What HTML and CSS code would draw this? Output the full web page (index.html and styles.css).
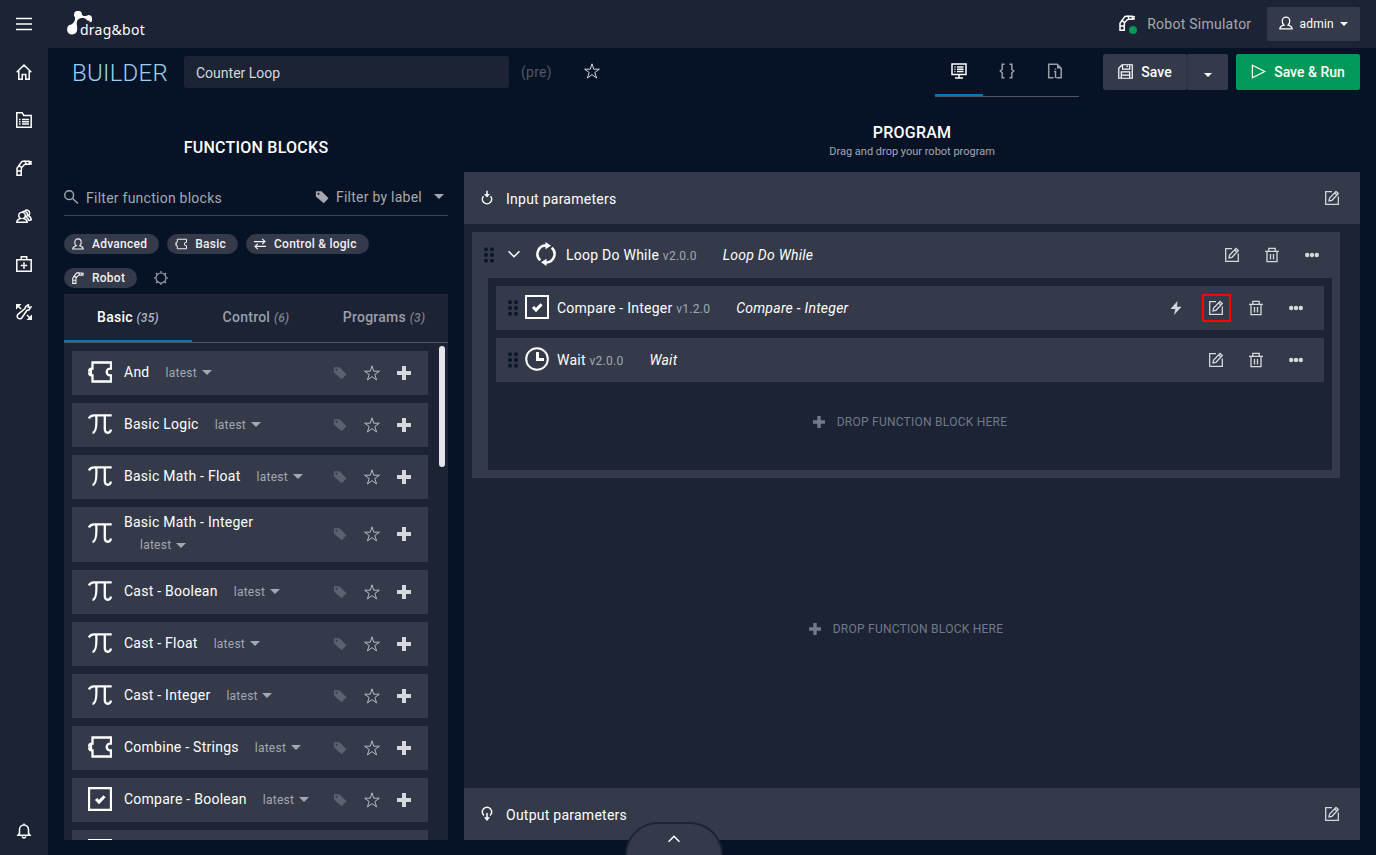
FILE: index.html
```html
<!DOCTYPE html>
<html lang="en">
<head>
    <meta charset="UTF-8">
    <meta name="viewport" content="width=device-width, initial-scale=1">
    <title>Counter Loop - Builder</title>
    <link rel="stylesheet" href="styles.css">
</head>
<body>
    <!-- icon set -->
    <svg class="sprite" aria-hidden="true">
        <symbol id="i-menu" viewBox="0 0 16 16"><path d="M0 2.500h16M0 8h16M0 13.500h16"/></symbol>
        <symbol id="i-home" viewBox="0 0 16 16"><path d="M.7 8.200L8 1l7.300 7.200M2.800 7v8.200h3.400v-4.700h3.600v4.700h3.400V7"/></symbol>
        <symbol id="i-folder" viewBox="0 0 16 16"><path d="M.8 15.200V.8h5.400l1.600 2.600h7.400v11.800zM3 7.500h1.500M6 7.500h7M3 9.800h1.500M6 9.800h7M3 12h1.500M6 12h7"/></symbol>
        <symbol id="i-robot" viewBox="0 0 16 16"><path d="M1 15.200V11h4.200v4.200zM1 11V8.200l1.500-2h1.700l1.300 1.500-.3 3.300M2.300 6.200L6 1.500l3-.5 1 3-1.800.8-3 3.200M9.500 1.300H13l3 .8M10 4.200h3.500L13 1.500M13.500 3.600l2.500.4"/></symbol>
        <symbol id="i-users" viewBox="0 0 16 16"><path d="M.8 14.200c0-2.200 1.800-3.300 3.700-3.800a3.300 3.300 0 1 1 3 0c1.900.5 3.700 1.600 3.700 3.800zM6.300 4.200a3 3 0 0 1 4.900 3.200c-.3.900-.8 1.400-1.200 1.600 1.500.6 2.600 2 3 4M9 2.600a3 3 0 0 1 4.500 3.300c-.3.900-.7 1.400-1.200 1.600 1.500.7 2.700 2.200 3 4.200l-2 .8"/></symbol>
        <symbol id="i-medkit" viewBox="0 0 16 16"><path d="M.8 3.800h14.400v11.400H.8zM5.300 3.500V.8h5.400v2.700M8 6.300v6.400M4.800 9.500h6.400"/></symbol>
        <symbol id="i-tools" viewBox="0 0 16 16"><path d="M1.700 10.600l7.300-6 .7-2.100L12.500.6l-.3 2.600 2.700-.2-1.800 2.800-2.200.7-5 7.200a2.600 2.600 0 1 1-4.200-3.100zM1 1l4 4M15 15l-4-4"/><path class="solid" d="M0 0h5.500L0 5.500zM16 16h-5.500L16 10.500z"/></symbol>
        <symbol id="i-bell" viewBox="0 0 16 16"><path d="M2 12.300h12l-1.500-2V6.500a4.500 4.500 0 0 0-9 0v3.800zM8 2V.4M6.300 13.300a1.700 1.700 0 0 0 3.400 0"/></symbol>
        <symbol id="i-user" viewBox="0 0 16 16"><path d="M1 14.700c0-2.200 1.500-3.500 4.600-4.400C3.900 9 3.700 7.300 3.700 5.500a4.300 4.300 0 0 1 8.600 0c0 1.800-.2 3.500-1.900 4.800 3.100.9 4.600 2.200 4.600 4.400z"/></symbol>
        <symbol id="i-star" viewBox="0 0 16 16"><path d="M8 .8l1.700 5.400h5.700l-4.600 3.300 1.800 5.500L8 11.600 3.400 15l1.800-5.500L.6 6.200h5.700z"/></symbol>
        <symbol id="i-monitor" viewBox="0 0 16 16"><path d="M1 1h14v10.500H1zM4 15h8M8 12v3M3.500 4h1M6 4h6.500M3.500 6.200h1M6 6.200h6.500M3.500 8.500h1M6 8.500h6.500"/></symbol>
        <symbol id="i-braces" viewBox="0 0 16 16"><path d="M5.500 1.200H3.200v5L1.300 8l1.900 1.800v5h2.300M10.500 1.200h2.300v5L14.700 8l-1.900 1.800v5h-2.300"/></symbol>
        <symbol id="i-doc" viewBox="0 0 16 16"><path d="M1.700 1.200h8.500l4 4v9.600H9.500M6.500 14.800H1.700V.5M8.500 8v7M7 8.500h1.500M8.500 5.500v1.200"/><path class="solid" d="M10 1l4.500 4.500H10z"/></symbol>
        <symbol id="i-save" viewBox="0 0 16 16"><path d="M.8 4.500L4.300.8h10.900v14.400H.8zM4.800 1v4.500h7.700V1M9.800 1.500v2M3.500 15V8.500h9V15M3.500 11.800h9"/></symbol>
        <symbol id="i-play" viewBox="0 0 16 16"><path d="M1.500 1.300L14.700 8 1.500 14.700z"/></symbol>
        <symbol id="i-caret" viewBox="0 0 10 5"><path class="solid" d="M0 0h10L5 5z"/></symbol>
        <symbol id="i-search" viewBox="0 0 16 16"><circle cx="5.500" cy="5.500" r="4.700"/><path d="M8.900 8.900l6 5.600"/></symbol>
        <symbol id="i-tag" viewBox="0 0 16 16"><path class="solid" fill-rule="evenodd" d="M1 1.500h6.500l8 8L10 15 1 7.500zM4 3.200a1.200 1.200 0 1 0 0 2.400 1.200 1.200 0 0 0 0-2.400z"/></symbol>
        <symbol id="i-puzzle" viewBox="0 0 24 24"><path d="M4.500 2.500H23v6.200h-1a3.300 3.300 0 0 0 0 6.600h1v6.200H4.500v-6.200H3.200a2 2 0 0 1-2-2H3v-2.600H1.200a2 2 0 0 1 2-2h1.300z"/></symbol>
        <symbol id="i-swap" viewBox="0 0 16 16"><path d="M0 4.800h14.500M11 1.200l3.700 3.600L11 8M16 11.200H1.500M5 7.700l-3.700 3.500L5 14.800"/></symbol>
        <symbol id="i-gear" viewBox="0 0 16 16"><circle cx="8" cy="8" r="5"/><path d="M8 1v2M8 13v2M1 8h2M13 8h2M3 3l1.500 1.500M11.500 11.500L13 13M3 13l1.500-1.500M11.500 4.500L13 3"/></symbol>
        <symbol id="i-pi" viewBox="0 0 24 24"><path d="M.8 6.500C2 4 4 3.300 6 3.300h17.700M8.300 4c.3 6 .3 16.500-3.800 17M16.800 4v13c0 5 5.700 4.800 6 .5"/></symbol>
        <symbol id="i-check" viewBox="0 0 24 24"><path d="M1 1h22v22H1z"/><path class="thick" d="M8 12l3 3 5.500-5.800"/></symbol>
        <symbol id="i-clock" viewBox="0 0 24 24"><circle cx="12" cy="12" r="10.800"/><path class="thick" d="M12.500 5v7.500H19"/></symbol>
        <symbol id="i-loop" viewBox="0 0 20 24"><path d="M4.300 18.300A8.500 8.500 0 0 1 10.500 3.500M15.700 5.700A8.500 8.500 0 0 1 9.500 20.500"/><path class="solid" d="M9.500 0l5.500 3.700-5.500 3.600zM10.500 16.700V24L5 20.300z"/></symbol>
        <symbol id="i-grip" viewBox="0 0 10 16"><path class="solid" d="M0 2.200a2 2 0 1 1 4 0 2 2 0 0 1-4 0M6 2.200a2 2 0 1 1 4 0 2 2 0 0 1-4 0M0 8a2 2 0 1 1 4 0 2 2 0 0 1-4 0M6 8a2 2 0 1 1 4 0 2 2 0 0 1-4 0M0 13.800a2 2 0 1 1 4 0 2 2 0 0 1-4 0M6 13.800a2 2 0 1 1 4 0 2 2 0 0 1-4 0"/></symbol>
        <symbol id="i-down" viewBox="0 0 12 12"><path d="M.5 3.200L6 8.800l5.500-5.600"/></symbol>
        <symbol id="i-up" viewBox="0 0 12 12"><path d="M.5 8.800L6 3.200l5.500 5.600"/></symbol>
        <symbol id="i-edit" viewBox="0 0 16 16"><path d="M8 1.700H1.700v12.600h12.600V6.500M5 11l.6-3L12 1.500l2.300 2L8 10.300zM10.800 3l2 2"/></symbol>
        <symbol id="i-trash" viewBox="0 0 16 16"><path d="M1 4.300h14M4.800 4V1.400h6.400V4M3 4.500v10.200h10V4.500M6.500 7v5.500M9.500 7v5.500"/></symbol>
        <symbol id="i-dots" viewBox="0 0 16 16"><path class="solid" d="M1 8a2.200 2.200 0 1 1 4.400 0A2.200 2.200 0 0 1 1 8M5.800 8a2.200 2.200 0 1 1 4.400 0 2.200 2.200 0 0 1-4.400 0M10.600 8A2.200 2.200 0 1 1 15 8a2.200 2.200 0 0 1-4.400 0"/></symbol>
        <symbol id="i-bolt" viewBox="0 0 16 16"><path class="solid" d="M9.500 1L2.500 9h4.800L6 15l7.500-8.300H9z"/></symbol>
        <symbol id="i-plus" viewBox="0 0 14 14"><path class="solid" d="M5 0h4v5h5v4H9v5H5V9H0V5h5z"/></symbol>
        <symbol id="i-in" viewBox="0 0 12 16"><path d="M2.500 6.200A4.600 4.600 0 1 0 9.500 6.200M6 .8v4"/><path class="solid" d="M3 4h6L6 7.500z"/></symbol>
        <symbol id="i-out" viewBox="0 0 12 16"><path d="M3 9.500a4.700 4.700 0 1 1 6 0M6 7v5"/><path class="solid" d="M3 11.200h6L6 15z"/></symbol>
    </svg>

    <header class="topbar">
        <button class="menu" aria-label="Menu"><svg class="icon"><use href="#i-menu"/></svg></button>
        <a class="logo" href="#">
            <svg viewBox="0 0 26 24" aria-hidden="true"><path d="M7 4a4 4 0 0 1 8-.5c.4 1.700 3 1.700 4.700 1.300A3.300 3.300 0 0 1 25 8c0 1.500.3 2.500-1 3l-2 .2 1-1.400c-2 .2-3.500-.6-4.200-1.800-1.500-1.400-4.500-.8-6-.6C10.500 8 10 9.500 9.700 13c.5 3 .6 4 .4 6a5 5 0 1 1-6-5.500C6.500 13 8.500 9 8 6.500A4 4 0 0 1 7 4z"/></svg>
            <span>drag&amp;bot</span>
        </a>
        <div class="robot-status">
            <span class="robot-icon"><svg class="icon"><use href="#i-robot"/></svg></span>
            <span>Robot Simulator</span>
        </div>
        <button class="admin">
            <svg class="icon"><use href="#i-user"/></svg>
            <span>admin</span>
            <svg class="caret"><use href="#i-caret"/></svg>
        </button>
    </header>

    <nav class="sidebar">
        <a href="#" aria-label="Home"><svg class="icon"><use href="#i-home"/></svg></a>
        <a href="#" aria-label="Programs"><svg class="icon"><use href="#i-folder"/></svg></a>
        <a href="#" aria-label="Robot"><svg class="icon"><use href="#i-robot"/></svg></a>
        <a href="#" aria-label="Users"><svg class="icon"><use href="#i-users"/></svg></a>
        <a href="#" aria-label="Support"><svg class="icon"><use href="#i-medkit"/></svg></a>
        <a href="#" aria-label="Tools"><svg class="icon"><use href="#i-tools"/></svg></a>
        <a class="last" href="#" aria-label="Notifications"><svg class="icon"><use href="#i-bell"/></svg></a>
    </nav>

    <main>
        <div class="toolbar">
            <h1>BUILDER</h1>
            <input class="name" type="text" value="Counter Loop" aria-label="Program name">
            <span class="pre">(pre)</span>
            <button class="favorite" aria-label="Favorite"><svg class="icon"><use href="#i-star"/></svg></button>
            <div class="views">
                <button class="active" aria-label="Program view"><svg class="icon"><use href="#i-monitor"/></svg></button>
                <button aria-label="Code view"><svg class="icon"><use href="#i-braces"/></svg></button>
                <button aria-label="Info"><svg class="icon"><use href="#i-doc"/></svg></button>
            </div>
            <div class="save-group">
                <button class="btn save"><svg class="icon"><use href="#i-save"/></svg>Save</button>
                <button class="btn more" aria-label="More save options"><svg class="caret"><use href="#i-caret"/></svg></button>
            </div>
            <button class="btn run"><svg class="icon"><use href="#i-play"/></svg>Save &amp; Run</button>
        </div>

        <section class="blocks">
            <div class="section-head blocks-head">
                <h2>FUNCTION BLOCKS</h2>
            </div>
            <div class="filter">
                <svg class="icon"><use href="#i-search"/></svg>
                <input type="text" placeholder="Filter function blocks" aria-label="Filter function blocks">
                <button class="by-label">
                    <svg class="icon tag"><use href="#i-tag"/></svg>
                    <span>Filter by label</span>
                    <svg class="caret"><use href="#i-caret"/></svg>
                </button>
            </div>
            <div class="chips">
                <button class="chip"><svg class="icon"><use href="#i-user"/></svg>Advanced</button>
                <button class="chip"><svg class="icon puzzle"><use href="#i-puzzle"/></svg>Basic</button>
                <button class="chip"><svg class="icon"><use href="#i-swap"/></svg>Control &amp; logic</button>
                <button class="chip"><svg class="icon"><use href="#i-robot"/></svg>Robot</button>
                <button class="gear" aria-label="Label settings"><svg class="icon"><use href="#i-gear"/></svg></button>
            </div>
            <div class="library">
                <div class="tabs">
                    <button class="active">Basic <i>(35)</i></button>
                    <button>Control <i>(6)</i></button>
                    <button>Programs <i>(3)</i></button>
                </div>
                <ul class="list">
                    <li class="card">
                        <svg class="type"><use href="#i-puzzle"/></svg>
                        <div class="label"><span>And</span><span class="version"><select aria-label="Version of And"><option>latest</option></select><svg class="caret"><use href="#i-caret"/></svg></span></div>
                        <button class="tagged" aria-label="Labels"><svg class="icon"><use href="#i-tag"/></svg></button>
                        <button class="star" aria-label="Favorite"><svg class="icon"><use href="#i-star"/></svg></button>
                        <button class="add" aria-label="Add"><svg class="icon"><use href="#i-plus"/></svg></button>
                    </li>
                    <li class="card">
                        <svg class="type"><use href="#i-pi"/></svg>
                        <div class="label"><span>Basic Logic</span><span class="version"><select aria-label="Version of Basic Logic"><option>latest</option></select><svg class="caret"><use href="#i-caret"/></svg></span></div>
                        <button class="tagged" aria-label="Labels"><svg class="icon"><use href="#i-tag"/></svg></button>
                        <button class="star" aria-label="Favorite"><svg class="icon"><use href="#i-star"/></svg></button>
                        <button class="add" aria-label="Add"><svg class="icon"><use href="#i-plus"/></svg></button>
                    </li>
                    <li class="card">
                        <svg class="type"><use href="#i-pi"/></svg>
                        <div class="label"><span>Basic Math - Float</span><span class="version"><select aria-label="Version of Basic Math - Float"><option>latest</option></select><svg class="caret"><use href="#i-caret"/></svg></span></div>
                        <button class="tagged" aria-label="Labels"><svg class="icon"><use href="#i-tag"/></svg></button>
                        <button class="star" aria-label="Favorite"><svg class="icon"><use href="#i-star"/></svg></button>
                        <button class="add" aria-label="Add"><svg class="icon"><use href="#i-plus"/></svg></button>
                    </li>
                    <li class="card">
                        <svg class="type"><use href="#i-pi"/></svg>
                        <div class="label"><span>Basic Math - Integer</span><span class="version"><select aria-label="Version of Basic Math - Integer"><option>latest</option></select><svg class="caret"><use href="#i-caret"/></svg></span></div>
                        <button class="tagged" aria-label="Labels"><svg class="icon"><use href="#i-tag"/></svg></button>
                        <button class="star" aria-label="Favorite"><svg class="icon"><use href="#i-star"/></svg></button>
                        <button class="add" aria-label="Add"><svg class="icon"><use href="#i-plus"/></svg></button>
                    </li>
                    <li class="card">
                        <svg class="type"><use href="#i-pi"/></svg>
                        <div class="label"><span>Cast - Boolean</span><span class="version"><select aria-label="Version of Cast - Boolean"><option>latest</option></select><svg class="caret"><use href="#i-caret"/></svg></span></div>
                        <button class="tagged" aria-label="Labels"><svg class="icon"><use href="#i-tag"/></svg></button>
                        <button class="star" aria-label="Favorite"><svg class="icon"><use href="#i-star"/></svg></button>
                        <button class="add" aria-label="Add"><svg class="icon"><use href="#i-plus"/></svg></button>
                    </li>
                    <li class="card">
                        <svg class="type"><use href="#i-pi"/></svg>
                        <div class="label"><span>Cast - Float</span><span class="version"><select aria-label="Version of Cast - Float"><option>latest</option></select><svg class="caret"><use href="#i-caret"/></svg></span></div>
                        <button class="tagged" aria-label="Labels"><svg class="icon"><use href="#i-tag"/></svg></button>
                        <button class="star" aria-label="Favorite"><svg class="icon"><use href="#i-star"/></svg></button>
                        <button class="add" aria-label="Add"><svg class="icon"><use href="#i-plus"/></svg></button>
                    </li>
                    <li class="card">
                        <svg class="type"><use href="#i-pi"/></svg>
                        <div class="label"><span>Cast - Integer</span><span class="version"><select aria-label="Version of Cast - Integer"><option>latest</option></select><svg class="caret"><use href="#i-caret"/></svg></span></div>
                        <button class="tagged" aria-label="Labels"><svg class="icon"><use href="#i-tag"/></svg></button>
                        <button class="star" aria-label="Favorite"><svg class="icon"><use href="#i-star"/></svg></button>
                        <button class="add" aria-label="Add"><svg class="icon"><use href="#i-plus"/></svg></button>
                    </li>
                    <li class="card">
                        <svg class="type"><use href="#i-puzzle"/></svg>
                        <div class="label"><span>Combine - Strings</span><span class="version"><select aria-label="Version of Combine - Strings"><option>latest</option></select><svg class="caret"><use href="#i-caret"/></svg></span></div>
                        <button class="tagged" aria-label="Labels"><svg class="icon"><use href="#i-tag"/></svg></button>
                        <button class="star" aria-label="Favorite"><svg class="icon"><use href="#i-star"/></svg></button>
                        <button class="add" aria-label="Add"><svg class="icon"><use href="#i-plus"/></svg></button>
                    </li>
                    <li class="card">
                        <svg class="type"><use href="#i-check"/></svg>
                        <div class="label"><span>Compare - Boolean</span><span class="version"><select aria-label="Version of Compare - Boolean"><option>latest</option></select><svg class="caret"><use href="#i-caret"/></svg></span></div>
                        <button class="tagged" aria-label="Labels"><svg class="icon"><use href="#i-tag"/></svg></button>
                        <button class="star" aria-label="Favorite"><svg class="icon"><use href="#i-star"/></svg></button>
                        <button class="add" aria-label="Add"><svg class="icon"><use href="#i-plus"/></svg></button>
                    </li>
                    <li class="card">
                        <svg class="type"><use href="#i-check"/></svg>
                    </li>
                </ul>
                <div class="scroll-thumb"></div>
            </div>
        </section>

        <section class="program">
            <div class="section-head program-head">
                <h2>PROGRAM</h2>
                <p>Drag and drop your robot program</p>
            </div>
            <div class="params">
                <svg class="io"><use href="#i-in"/></svg>
                <span>Input parameters</span>
                <button class="action" aria-label="Edit input parameters"><svg class="icon"><use href="#i-edit"/></svg></button>
            </div>
            <div class="canvas">
                <div class="loop">
                    <div class="loop-head">
                        <svg class="grip"><use href="#i-grip"/></svg>
                        <button class="fold" aria-label="Collapse"><svg><use href="#i-down"/></svg></button>
                        <svg class="type loop-icon"><use href="#i-loop"/></svg>
                        <span class="title">Loop Do While <small>v2.0.0</small></span>
                        <em>Loop Do While</em>
                        <button class="action" aria-label="Edit"><svg class="icon"><use href="#i-edit"/></svg></button>
                        <button class="action" aria-label="Delete"><svg class="icon"><use href="#i-trash"/></svg></button>
                        <button class="action" aria-label="More"><svg class="icon"><use href="#i-dots"/></svg></button>
                    </div>
                    <div class="loop-body">
                        <div class="step">
                            <svg class="grip"><use href="#i-grip"/></svg>
                            <svg class="type"><use href="#i-check"/></svg>
                            <span class="title">Compare - Integer <small>v1.2.0</small></span>
                            <em>Compare - Integer</em>
                            <button class="action" aria-label="Run"><svg class="icon"><use href="#i-bolt"/></svg></button>
                            <button class="action marked" aria-label="Edit"><svg class="icon"><use href="#i-edit"/></svg></button>
                            <button class="action" aria-label="Delete"><svg class="icon"><use href="#i-trash"/></svg></button>
                            <button class="action" aria-label="More"><svg class="icon"><use href="#i-dots"/></svg></button>
                        </div>
                        <div class="step">
                            <svg class="grip"><use href="#i-grip"/></svg>
                            <svg class="type"><use href="#i-clock"/></svg>
                            <span class="title">Wait <small>v2.0.0</small></span>
                            <em>Wait</em>
                            <button class="action" aria-label="Edit"><svg class="icon"><use href="#i-edit"/></svg></button>
                            <button class="action" aria-label="Delete"><svg class="icon"><use href="#i-trash"/></svg></button>
                            <button class="action" aria-label="More"><svg class="icon"><use href="#i-dots"/></svg></button>
                        </div>
                        <div class="drop"><svg><use href="#i-plus"/></svg>DROP FUNCTION BLOCK HERE</div>
                    </div>
                </div>
                <div class="drop drop-main"><svg><use href="#i-plus"/></svg>DROP FUNCTION BLOCK HERE</div>
            </div>
            <div class="params">
                <svg class="io"><use href="#i-out"/></svg>
                <span>Output parameters</span>
                <button class="action" aria-label="Edit output parameters"><svg class="icon"><use href="#i-edit"/></svg></button>
            </div>
        </section>
    </main>

    <button class="drawer" aria-label="Open panel"><svg><use href="#i-up"/></svg></button>
</body>
</html>
```
FILE: styles.css
```css
* {
    box-sizing: border-box;
}
body {
    margin: 0;
    height: 100vh;
    overflow: hidden;
    display: grid;
    grid-template: 48px minmax(0, 1fr) / 48px minmax(0, 1fr);
    background-color: #061226;
    color: white;
    font-family: Roboto, sans-serif;
    font-size: 14px;
    line-height: 20px;
    letter-spacing: 0.25px;
}
h1, h2, p, ul {
    margin: 0;
    padding: 0;
}
button, input, select {
    font: inherit;
    letter-spacing: inherit;
    color: inherit;
    background: none;
    border: none;
    padding: 0;
    outline: none;
}
button {
    display: flex;
    align-items: center;
    justify-content: center;
    cursor: pointer;
}
svg {
    flex: none;
    fill: none;
    stroke: currentColor;
    stroke-width: 1.5;
}
.solid {
    fill: currentColor;
    stroke: none;
}
.thick {
    stroke-width: 3;
}
.sprite {
    position: absolute;
    width: 0;
    height: 0;
}
.icon {
    width: 16px;
    height: 16px;
}
.caret {
    width: 10px;
    height: 5px;
}

/* top bar and side menu */
.topbar {
    grid-column: 1 / 3;
    display: flex;
    align-items: center;
    padding-right: 16px;
    background-color: #1b2335;
}
.menu {
    width: 48px;
    height: 48px;
}
.logo {
    display: flex;
    align-items: flex-end;
    margin: 0 0 2px 19px;
    color: white;
    text-decoration: none;
    font: 14px/20px "Noto Sans", sans-serif;
}
.logo svg {
    width: 26px;
    height: 24px;
    fill: white;
    stroke: none;
}
.logo span {
    margin: 0 0 -5px -13px;
}
.robot-status {
    display: flex;
    align-items: center;
    gap: 10px;
    margin: 0 16px 0 auto;
    color: #a5a8b1;
}
.robot-icon {
    position: relative;
    display: flex;
    padding: 0 2px 3px 0;
    color: white;
}
.robot-icon::after {
    content: "";
    position: absolute;
    right: 0;
    bottom: 0;
    width: 8px;
    height: 8px;
    border-radius: 50%;
    background-color: #009959;
}
.admin {
    height: 34px;
    padding: 0 12px;
    gap: 6px;
    border-radius: 2px;
    background-color: #343a49;
    font-size: 12px;
}
.admin .icon {
    width: 14px;
    height: 14px;
    margin-bottom: 2px;
}
.admin .caret, .more .caret {
    width: 8px;
    height: 4px;
}
.sidebar {
    display: flex;
    flex-direction: column;
    background-color: #1b2335;
}
.sidebar a {
    display: flex;
    align-items: center;
    justify-content: center;
    height: 48px;
    color: white;
}
.sidebar .last {
    margin-top: auto;
}

/* main area */
main {
    display: grid;
    grid-template: 50px minmax(0, 1fr) / 384px minmax(0, 1fr);
    column-gap: 16px;
    padding: 0 16px 15px;
}
.toolbar {
    grid-column: 1 / 3;
    display: flex;
    align-items: flex-start;
    padding: 6px 0 0 8px;
}
h1 {
    width: 112px;
    font-size: 24px;
    font-weight: 300;
    line-height: 38px;
    color: #9ad0f0;
}
.name {
    width: 325px;
    height: 32px;
    margin-top: 2px;
    padding: 2px 12px 0;
    border-radius: 2px;
    background-color: #1b2335;
    color: #d6d8dc;
    letter-spacing: 0;
}
.pre {
    margin: 8px 32px 0 12px;
    color: #50586a;
}
.favorite {
    height: 34px;
    color: #d6d8dc;
}
.favorite svg, .star svg {
    stroke-width: 1;
}
.views {
    display: flex;
    margin-left: auto;
    border-bottom: 1px solid #50555f;
}
.views button {
    width: 48px;
    height: 42px;
    padding-bottom: 8px;
    color: #9b9fa9;
}
.views .active {
    color: white;
    border-bottom: 2px solid #0078c0;
    padding-bottom: 6px;
}
.save-group {
    display: flex;
    margin: 0 8px 0 24px;
}
.btn {
    height: 36px;
    gap: 8px;
    border-radius: 2px;
    background-color: #343a49;
    font-weight: 500;
    letter-spacing: 0;
}
.btn .icon {
    width: 15px;
    height: 15px;
    margin-bottom: 2px;
    stroke-width: 1.3;
}
.save {
    width: 84px;
}
.more {
    width: 41px;
    padding-top: 6px;
    border-left: 1px solid #2d3342;
}
.run {
    width: 124px;
    background-color: #009959;
}
.section-head {
    display: flex;
    flex-direction: column;
    height: 74px;
    text-align: center;
}
.blocks-head {
    justify-content: center;
    padding-top: 26px;
}
.program-head {
    justify-content: flex-end;
    padding-bottom: 12px;
}
h2 {
    font-size: 16px;
    font-weight: 500;
    line-height: 20px;
}
.section-head p {
    font-size: 11px;
    line-height: 17px;
    letter-spacing: 0;
    color: #a5a8b1;
}

/* function blocks */
.blocks, .program {
    display: flex;
    flex-direction: column;
    min-height: 0;
}
.filter {
    display: flex;
    align-items: center;
    gap: 7px;
    height: 36px;
    margin-top: 8px;
    border-bottom: 1px solid #3b4251;
    color: #a5a8b1;
}
.filter .icon {
    width: 15px;
    height: 15px;
}
.filter input {
    flex: 1;
    min-width: 0;
}
.filter input::placeholder {
    color: #a5a8b1;
}
.by-label {
    gap: 7px;
    margin-bottom: 2px;
}
.filter .tag {
    width: 14px;
    height: 14px;
}
.by-label .caret {
    margin: 0 4px 0 5px;
}
.chips {
    display: flex;
    flex-wrap: wrap;
    gap: 14px 8px;
    padding: 18px 0 6px;
}
.chip {
    height: 20px;
    padding: 0 12px 0 8px;
    gap: 8px;
    border-radius: 10px;
    background-color: #343a49;
    color: #f0f0f2;
    font-size: 12px;
    font-weight: 500;
}
.chip .icon {
    width: 12px;
    height: 12px;
}
.chip .puzzle {
    stroke-width: 2;
}
.gear {
    width: 32px;
    height: 20px;
    color: #9b9fa9;
}
.gear .icon {
    stroke-width: 1.2;
}
.library {
    position: relative;
    flex: 1;
    min-height: 0;
    display: flex;
    flex-direction: column;
    background-color: #1b2335;
}
.tabs {
    display: flex;
    border-bottom: 1px solid #50555f;
}
.tabs button {
    display: block;
    flex: 1;
    height: 48px;
    padding-bottom: 2px;
    color: #9b9fa9;
    font-weight: 500;
}
.tabs i {
    font-size: 12px;
    color: #7c818e;
}
.tabs .active {
    color: white;
    border-bottom: 2px solid #0078c0;
    padding-bottom: 0;
}
.tabs .active i {
    color: #b5b8c0;
}
.list {
    flex: 1;
    min-height: 0;
    overflow: hidden;
    display: flex;
    flex-direction: column;
    gap: 8px;
    padding: 8px 20px 0 8px;
    list-style: none;
}
.card {
    flex: none;
    display: flex;
    align-items: center;
    min-height: 44px;
    padding: 4px 8px 7px 16px;
    background-color: #343a49;
}
.type {
    width: 24px;
    height: 24px;
    stroke-width: 2;
}
.card .type {
    stroke-width: 2.3;
}
.label {
    flex: 1;
    display: flex;
    flex-wrap: wrap;
    padding: 0 12px;
    line-height: 22px;
}
.version {
    display: flex;
    align-items: center;
    gap: 4px;
    margin-left: 16px;
    font-size: 12px;
    color: #a5a8b1;
}
.version select {
    appearance: none;
    height: 22px;
    padding-top: 1px;
}
.version .caret {
    margin-top: 2px;
}
.card button {
    width: 32px;
    height: 32px;
    padding-top: 2px;
    color: #b5b8c0;
}
.card .tagged {
    color: #5b616f;
}
.card .tagged .icon, .card .add .icon {
    width: 14px;
    height: 14px;
}
.card .add {
    color: #d6d8dc;
}
.scroll-thumb {
    position: absolute;
    top: 52px;
    right: 3px;
    width: 6px;
    height: 121px;
    border-radius: 3px;
    background-color: #e6e6ea;
}

/* program */
.params {
    flex: none;
    display: flex;
    align-items: center;
    height: 52px;
    padding: 0 8px 0 17px;
    background-color: #343a49;
}
.params span {
    margin: 2px auto 0 13px;
}
.io {
    width: 12px;
    height: 16px;
}
.action {
    width: 40px;
    height: 28px;
    color: #d6d8dc;
}
.marked {
    position: relative;
}
.marked::after {
    content: "";
    position: absolute;
    inset: 0 5px 0 6px;
    border: 2px solid red;
}
.action .icon {
    stroke-width: 1.3;
}
.canvas {
    flex: 1;
    display: flex;
    flex-direction: column;
    padding: 8px 20px 0 8px;
    background-color: #1b2335;
}
.loop {
    padding: 0 8px 8px 16px;
    background-color: #343a49;
}
.loop-head {
    display: flex;
    align-items: center;
    height: 46px;
    margin: 0 0 0 -4px;
}
.loop-body {
    padding: 8px;
    background-color: #1b2335;
}
.step {
    display: flex;
    align-items: center;
    height: 44px;
    margin-bottom: 8px;
    padding: 0 8px 0 12px;
    background-color: #343a49;
}
.grip {
    width: 10px;
    height: 16px;
    color: #0b1529;
}
.step .type {
    margin: 0 0 2px 7px;
}
.fold {
    width: 12px;
    height: 28px;
    margin: 0 16px 2px 14px;
}
.fold svg {
    width: 12px;
    height: 12px;
}
.loop-head .loop-icon {
    width: 20px;
    margin: 0 2px 2px 0;
    stroke-width: 2.5;
}
.title {
    margin-left: 8px;
}
.title small {
    font-size: 12px;
    color: #a5a8b1;
}
em {
    margin: 0 auto 0 26px;
}
.drop {
    display: flex;
    align-items: center;
    justify-content: center;
    gap: 12px;
    height: 72px;
    padding-bottom: 8px;
    font-size: 12px;
    color: #747986;
}
.drop svg {
    width: 12px;
    height: 12px;
}
.drop-main {
    flex: 1;
}
.drawer {
    position: fixed;
    bottom: 0;
    left: 50%;
    width: 98px;
    height: 33px;
    margin-left: -63px;
    padding-bottom: 2px;
    border: 2px solid #1b2335;
    border-bottom: none;
    border-radius: 33px 33px 0 0;
    background-color: #343a49;
}
.drawer svg {
    width: 12px;
    height: 12px;
}
```
